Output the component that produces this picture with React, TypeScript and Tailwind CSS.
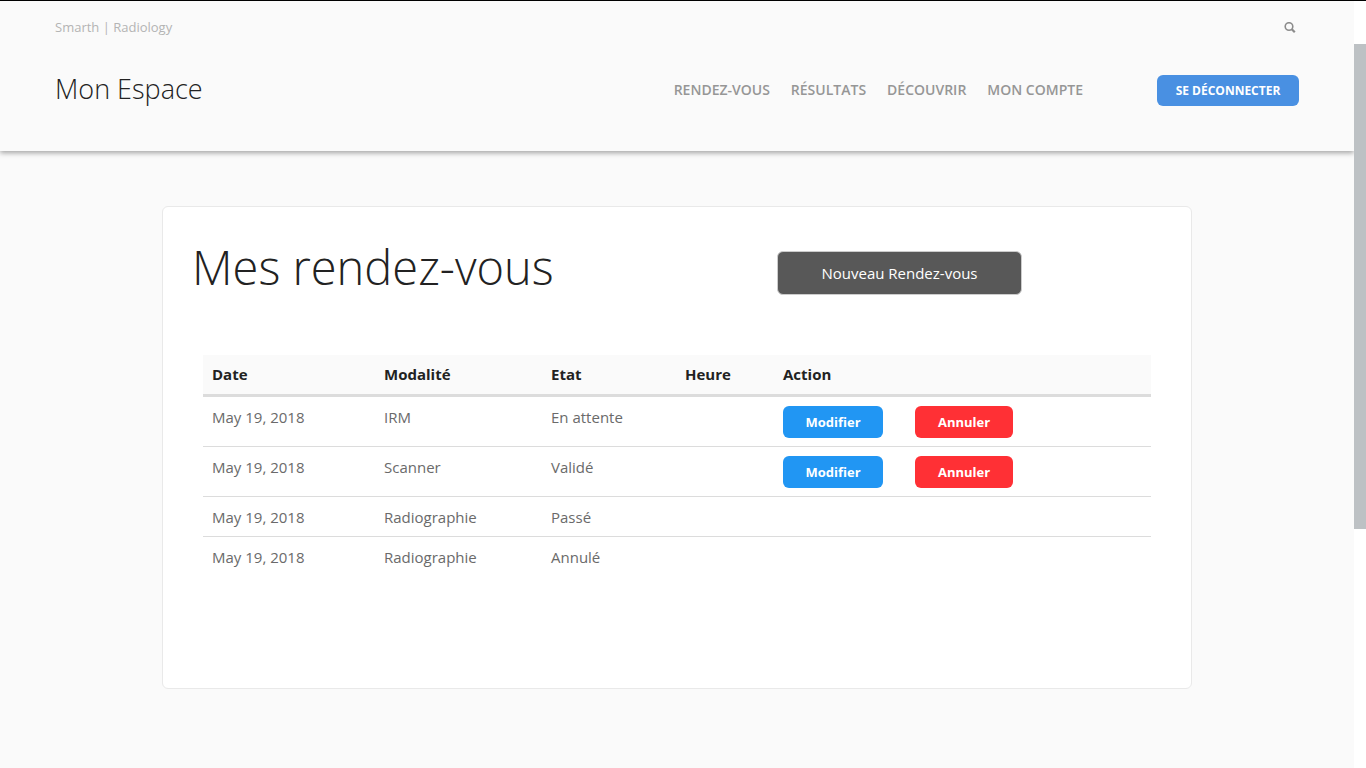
interface Appointment {
  id: number;
  date: string;
  modality: string;
  state: string;
  hour: string;
  editable: boolean;
}

const links = ["Rendez-vous", "Résultats", "Découvrir", "Mon compte"];

const appointments: Appointment[] = [
  { id: 1, date: "May 19, 2018", modality: "IRM", state: "En attente", hour: "", editable: true },
  { id: 2, date: "May 19, 2018", modality: "Scanner", state: "Validé", hour: "", editable: true },
  { id: 3, date: "May 19, 2018", modality: "Radiographie", state: "Passé", hour: "", editable: false },
  { id: 4, date: "May 19, 2018", modality: "Radiographie", state: "Annulé", hour: "", editable: false },
];

const SearchIcon = () => (
  <svg width="12" height="12" viewBox="0 0 12 12" fill="none" stroke="#8c8c8c" aria-hidden="true">
    <circle cx="5" cy="4.5" r="3.8" strokeWidth="1.6" />
    <path d="M7.8 7.3L10.8 10.3" strokeWidth="2.2" />
  </svg>
);

const Header = () => {
  return (
    <header className="relative border-t border-black bg-[#fafafa] px-[55px] pb-9 shadow-[0_2px_5px_rgba(0,0,0,0.35)]">
      <div className="flex h-[54px] items-center justify-between">
        <p className="text-[13px] text-[#b4b4b4]">Smarth | Radiology</p>
        <button type="button" aria-label="Rechercher" className="mr-[3px] cursor-pointer">
          <SearchIcon />
        </button>
      </div>
      <div className="flex h-[60px] items-end">
        <a href="#" className="mr-auto text-[27px] leading-[52px] font-light text-[#222]">Mon Espace</a>
        <nav className="mr-[74px] flex gap-[21px]">
          {links.map((link) => (
            <a key={link} href="#" className="text-[14px] leading-[50px] font-semibold text-[#969696] uppercase">{link}</a>
          ))}
        </nav>
        <button type="button" className="mb-[9px] h-[31px] w-[142px] cursor-pointer rounded-md bg-[#4990e2] text-[12px] font-bold text-white uppercase">
          Se déconnecter
        </button>
      </div>
    </header>
  );
};

const AppointmentTable = () => {
  return (
    <table className="w-full table-fixed border-collapse text-left text-[15px] leading-[22px] text-[#6a6a6a]">
      <thead>
        <tr className="border-b-3 border-[#dcdcdc] bg-[#fafafa] text-[#222]">
          <th scope="col" className="w-[172px] px-[9px] pt-2 pb-[9px] font-bold">Date</th>
          <th scope="col" className="w-[167px] px-[9px] pt-2 pb-[9px] font-bold">Modalité</th>
          <th scope="col" className="w-[134px] px-[9px] pt-2 pb-[9px] font-bold">Etat</th>
          <th scope="col" className="w-[98px] px-[9px] pt-2 pb-[9px] font-bold">Heure</th>
          <th scope="col" className="px-[9px] pt-2 pb-[9px] font-bold">Action</th>
        </tr>
      </thead>
      <tbody>
        {appointments.map((item) => (
          <tr key={item.id} className="border-b border-[#dcdcdc] align-top last:border-b-0">
            <td className="px-[9px] pt-[9px] pb-2">{item.date}</td>
            <td className="px-[9px] pt-[9px] pb-2">{item.modality}</td>
            <td className="px-[9px] pt-[9px] pb-2">{item.state}</td>
            <td className="px-[9px] pt-[9px] pb-2">{item.hour}</td>
            <td className="px-[9px] pt-[9px] pb-2">
              {item.editable && (
                <div className="flex gap-8">
                  <button type="button" className="h-8 w-[100px] cursor-pointer rounded-md bg-[#2196f3] text-[13px] font-bold text-white">Modifier</button>
                  <button type="button" className="h-8 w-[98px] cursor-pointer rounded-md bg-[#ff3035] text-[13px] font-bold text-white">Annuler</button>
                </div>
              )}
            </td>
          </tr>
        ))}
      </tbody>
    </table>
  );
};

const App = () => {
  return (
    <div className="flex min-h-screen bg-[#fafafa] font-['Open_Sans','Noto_Sans',sans-serif]">
      <div className="min-w-0 flex-1 overflow-hidden">
        <Header />
        <main className="px-6 pt-[55px] pb-[79px]">
          <section className="mx-auto max-w-[1030px] rounded-md border border-[#e9e9e9] bg-white px-[29px] pt-[30px] pb-[112px]">
            <div className="flex items-center">
              <h1 className="w-[585px] text-[47px] leading-[60px] font-light text-[#222]">Mes rendez-vous</h1>
              <button type="button" className="mt-3 h-11 w-[245px] cursor-pointer rounded-md border border-[#ccc] bg-[#585858] text-[15px] text-white">
                Nouveau Rendez-vous
              </button>
            </div>
            <div className="px-[11px] pt-[58px]">
              <AppointmentTable />
            </div>
          </section>
        </main>
      </div>
      {/* scroll track */}
      <div className="w-3 border-t border-black bg-white pt-[43px]">
        <div className="h-[485px] bg-[#bdc1c4]"></div>
      </div>
    </div>
  );
};

export default App;
